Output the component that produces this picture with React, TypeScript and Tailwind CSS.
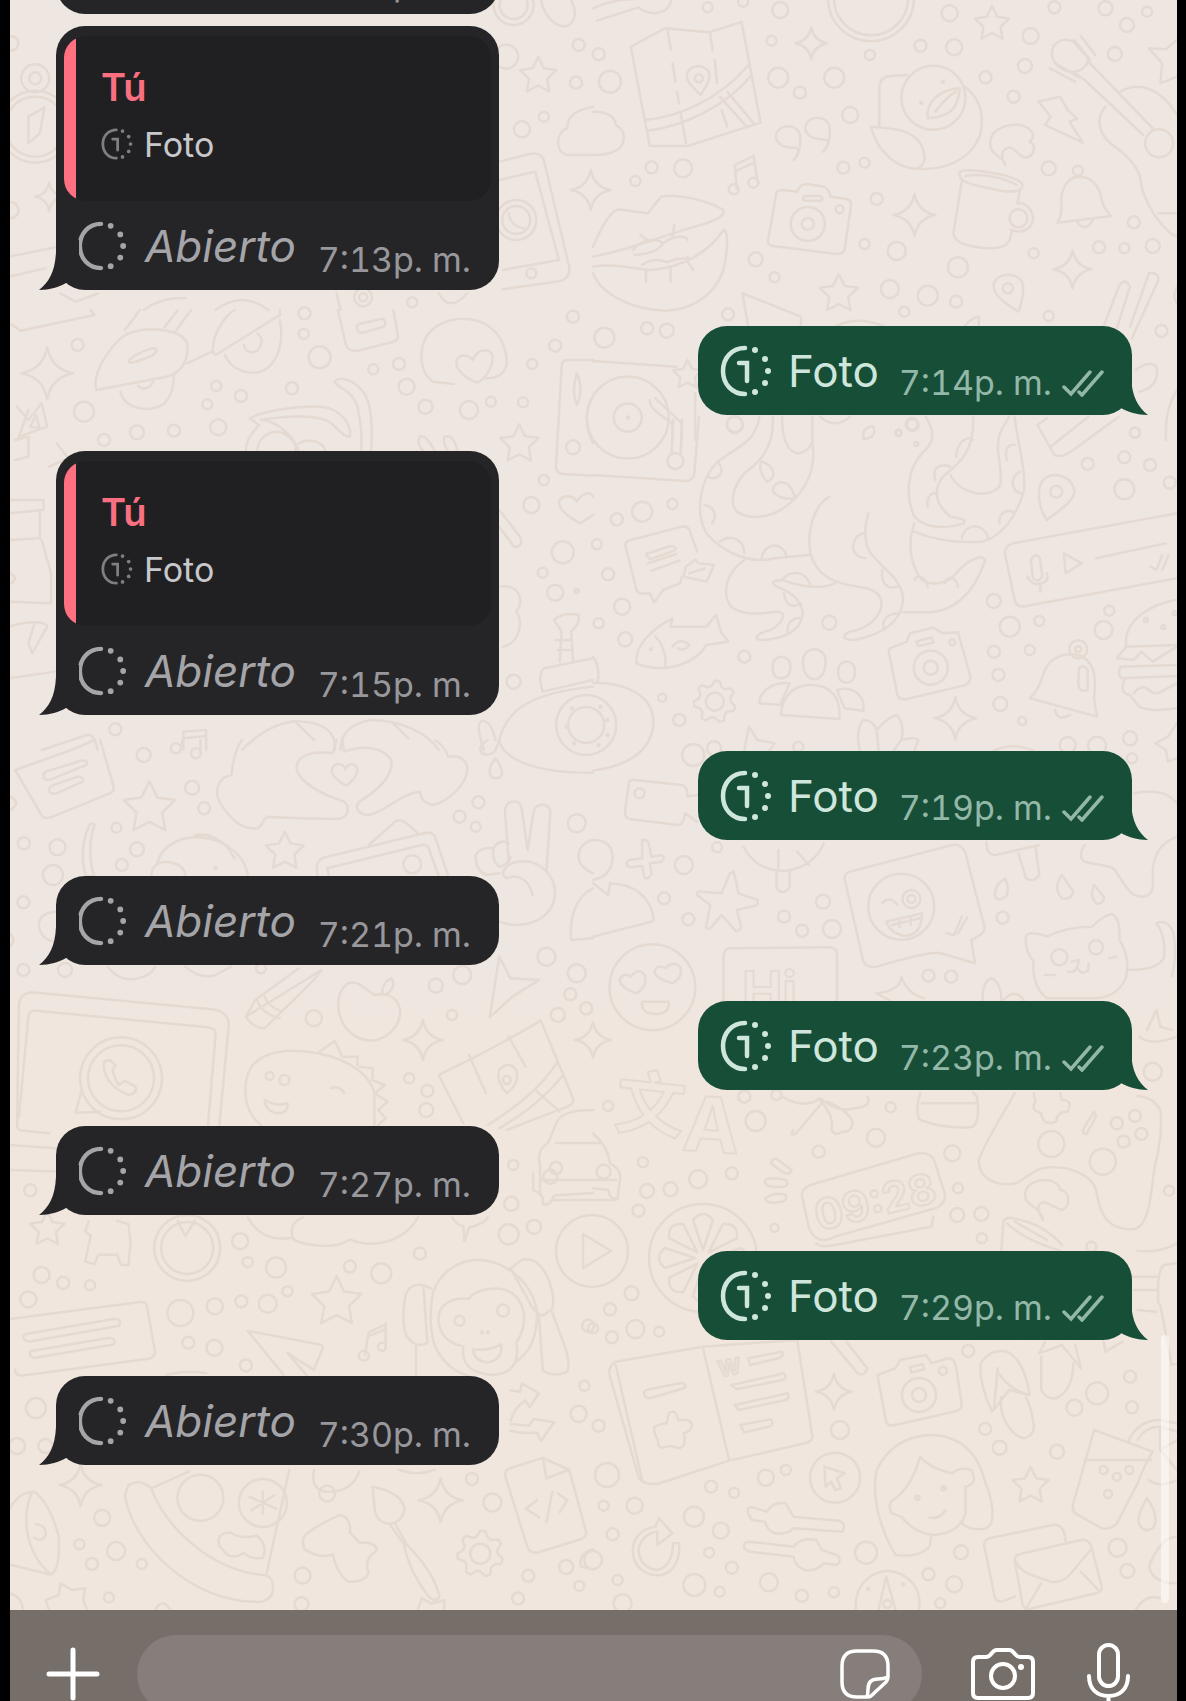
import React from 'react';

type Message =
  | { id: number; kind: 'opened'; time: string; reply?: boolean; grouped?: boolean }
  | { id: number; kind: 'photo'; time: string };

const messages: Message[] = [
  { id: 1, kind: 'opened', time: '7:13', grouped: true },
  { id: 2, kind: 'opened', time: '7:13', reply: true },
  { id: 3, kind: 'photo', time: '7:14' },
  { id: 4, kind: 'opened', time: '7:15', reply: true },
  { id: 5, kind: 'photo', time: '7:19' },
  { id: 6, kind: 'opened', time: '7:21' },
  { id: 7, kind: 'photo', time: '7:23' },
  { id: 8, kind: 'opened', time: '7:27' },
  { id: 9, kind: 'photo', time: '7:29' },
  { id: 10, kind: 'opened', time: '7:30' },
];

/* ---------- Wallpaper ---------- */

interface Tile {
  x: number;
  y: number;
  sx: number;
  sy: number;
  paths: string[];
  // x, y, radius
  dots: number[][];
  stars?: number[][];
  sparks?: number[][];
  gears?: number[][];
}

const SX = 0.3782;
const SY = 0.3333;

const tiles: Tile[] = [
  {
    x: 0, y: 0, sx: SX, sy: SY,
    paths: [
      'M118 322L75 350V430L105 400Z',
      'M26 770L147 742M26 830L120 805M160 880L200 905L260 880',
      'M1430 0C1440 50 1470 85 1500 78C1530 60 1520 20 1510 0',
      'M1568 320C1520 330 1500 350 1500 385C1470 395 1465 455 1500 465H1568',
      'M1320 485L1400 462Q1435 455 1440 490L1505 800Q1510 840 1470 845L1330 868',
      'M1320 540L1415 515L1478 780L1330 810M1345 640Q1350 680 1385 685',
      'M380 930Q430 890 490 895M570 930Q640 870 710 930M890 880L900 930M1160 880Q1190 940 1235 880',
    ],
    dots: [[93, 380, 36], [93, 380, 30], [93, 235, 14], [93, 235, 6], [28, 630, 8], [1358, 15, 20], [1358, 15, 14], [1530, 135, 6], [1523, 248, 6], [1438, 350, 5], [1380, 388, 8], [1338, 170, 12], [1365, 660, 20], [1365, 660, 14], [1405, 820, 5], [960, 892, 9], [960, 892, 4], [1090, 907, 5], [30, 130, 7]],
    stars: [[1423, 228, 19]],
    sparks: [[130, 590, 14], [1562, 570, 20]],
  },
  {
    x: 593, y: 0, sx: SX, sy: SY,
    paths: [
      'M100 140L190 85L305 97L393 66L443 368L250 438L150 438Z',
      'M197 90L206 150M210 190L218 245M222 275L228 310M310 100L316 150M322 180L328 250M232 340L246 430M340 330L355 380',
      'M137 360C230 350 330 300 412 195M143 392C240 380 350 320 420 225M335 290L405 378M355 275L425 370',
      'M285 285C260 260 245 240 248 225C252 190 305 190 308 225C308 250 295 265 285 285Z',
      'M0 25C60 -5 90 0 130 -5M10 62L120 22C150 50 200 45 207 0',
      'M757 380V260Q760 228 790 228L830 225M985 262C1040 310 1040 400 1000 450C960 500 900 512 840 505C780 490 745 430 735 380C800 385 850 390 870 440C880 470 880 490 860 505',
      'M885 355C880 310 910 270 970 265C965 320 950 350 885 355ZM905 335Q935 290 960 275',
      'M530 480C545 460 550 440 525 443C490 440 480 420 485 400C495 370 545 370 548 410C550 440 545 465 530 480Z',
      'M608 455C625 435 628 415 603 418C568 415 558 395 563 375C573 345 623 345 626 385C628 415 623 440 608 455Z',
      'M1090 495C1090 470 1050 470 1050 430C1050 390 1090 370 1130 375C1165 385 1170 410 1155 425C1175 440 1165 475 1140 472C1120 465 1120 445 1100 442C1075 450 1080 475 1090 495Z',
      'M1178 305L1235 290L1255 330L1280 355L1260 365L1295 428L1195 375L1210 350Z',
      'M1215 175C1205 130 1240 110 1270 125L1310 175C1310 195 1290 215 1270 215C1240 215 1225 200 1215 175',
      'M1270 215L1300 240L1455 405M1310 185L1480 385M1272 120L1315 180M1290 108L1328 165M1208 205L1275 245M1222 190L1285 232',
      'M1355 320C1325 360 1340 410 1380 440C1430 480 1450 520 1450 560C1470 640 1520 700 1544 710M1395 275C1440 245 1500 260 1544 345M1495 640H1544',
      'M1544 120L1515 148L1470 145L1505 190L1500 250L1544 230',
      'M380 565L375 495L425 468L435 545M380 512L428 487',
      'M485 578Q487 570 500 570L540 575L548 560Q553 552 570 553L610 560Q622 563 628 590L670 597Q685 600 682 620L665 750Q660 762 645 762L475 738Q460 735 463 720Z',
      'M560 588H600Q610 592 605 602H560Q550 598 560 588Z',
      'M970 525C960 505 1010 508 1060 520C1110 530 1140 545 1135 560C1130 580 1090 578 1050 565C1000 555 970 545 970 525ZM985 528C1030 518 1090 535 1120 555M975 545L953 700C955 730 1000 742 1050 745C1090 745 1100 730 1103 715L1108 690M1128 575L1122 610C1150 605 1168 640 1162 665C1155 695 1125 700 1105 690',
      'M1228 668C1245 640 1235 610 1240 580C1250 540 1270 530 1285 530C1320 530 1340 560 1345 600C1350 625 1360 635 1370 648ZM1280 665Q1300 700 1322 660',
      'M0 740C20 690 40 640 65 628L145 640L180 590C220 580 300 600 345 630C350 650 320 665 270 680C200 700 100 750 0 770M0 800C60 790 100 805 150 810C240 805 310 750 345 690C360 690 355 760 345 810C320 890 260 930 190 932C100 930 20 880 0 820',
      'M105 750C130 715 170 715 185 730C220 700 250 710 250 720M110 765Q170 760 185 730M130 795C170 765 190 790 200 785C230 770 255 780 250 770M125 705L145 720M215 675L210 710M140 810V845M205 808V845M250 785L265 810',
      'M1125 935C1080 905 1055 880 1060 850C1070 815 1130 815 1137 855C1140 890 1130 915 1125 935Z',
      'M410 975L395 880L550 950V975M640 980Q700 945 770 980M985 975Q1005 950 1020 950V980',
      'M1350 980L1390 860Q1405 830 1420 860L1385 985M1425 1015L1495 840Q1495 815 1470 820L1420 980',
      'M0 1083L222 1100M270 1180V1320M150 1200C150 1230 180 1245 210 1270V1320M165 1195L235 1270V1320M1544 860Q1530 890 1544 910',
      'M1445 1175Q1500 1160 1490 1100Q1470 1080 1435 1110M1515 1320Q1510 1230 1544 1170',
      'M0 335C50 335 60 360 60 375C90 390 90 440 55 455C40 465 20 465 0 465',
    ],
    dots: [[900, 293, 32], [1497, 430, 14], [735, -5, 43], [735, -5, 37], [280, 235, 4], [868, 308, 1], [925, 245, 1], [372, 568, 5], [424, 548, 5], [568, 672, 17], [568, 672, 6], [652, 628, 4], [1125, 655, 9], [1282, 512, 5], [1097, 865, 5], [92, 1253, 41], [92, 1253, 14], [92, 1253, 1],
      [303, 22, 5], [495, 30, 8], [397, 5, 5], [472, 122, 5], [732, 165, 5], [866, 137, 6], [955, 142, 8], [943, 40, 8], [1220, 22, 6], [1355, 25, 7], [1465, 35, 5], [1412, 75, 7], [1157, 108, 8], [1380, 162, 7], [1142, 198, 7], [1038, 232, 6], [1112, 290, 6], [15, 163, 6], [45, 245, 11], [490, 233, 10], [638, 233, 10], [547, 278, 6], [680, 345, 8], [155, 502, 6], [238, 505, 9], [112, 543, 5], [662, 503, 6], [718, 488, 5], [1205, 505, 7], [750, 597, 6], [1430, 667, 6], [1480, 738, 7], [1405, 745, 5], [1338, 742, 6], [1165, 760, 5], [430, 778, 7], [803, 753, 9], [718, 732, 5], [480, 832, 5], [965, 802, 10], [785, 867, 9], [885, 887, 10], [960, 905, 6], [823, 935, 5], [357, 943, 6], [30, 1013, 10], [143, 985, 6], [195, 992, 7], [1205, 948, 5], [1503, 993, 6], [375, 1272, 8], [843, 1272, 6], [808, 1298, 3], [1433, 1298, 5]],
    stars: [[1055, 72, 18], [650, 882, 20], [250, 1125, 15]],
    sparks: [[577, 130, 16], [850, 645, 21], [1268, 808, 19]],
  },
  {
    x: 0, y: 310, sx: SX, sy: SY,
    paths: [
      'M26 40L55 62L250 15L240 0',
      'M255 240C240 190 300 90 340 70C400 45 480 60 495 100C500 150 480 190 440 200ZM340 155C345 140 390 115 410 115C420 125 410 130 400 138C370 150 345 165 340 155ZM330 60L370 0M465 62L505 0M435 52L470 0M495 160L560 125',
      'M318 245C330 300 400 310 435 280C460 250 460 210 460 195M365 228C380 245 400 230 405 215',
      'M565 130C555 90 590 20 620 0M570 135L740 15V0M595 135C610 180 660 200 700 180C740 150 750 90 740 30M645 105C645 130 680 135 688 110C695 90 690 75 680 70',
      'M893 0L915 105Q920 125 945 122L1040 95Q1055 90 1052 75L1040 0M945 45C940 60 950 70 960 68L1015 50C1025 35 1015 25 1005 28L950 42',
      'M1200 222L1145 215C1110 190 1105 120 1130 75C1160 30 1220 15 1270 35C1320 60 1340 110 1340 160C1335 195 1310 205 1285 205',
      'M1262 218C1230 205 1200 175 1208 150C1218 130 1240 135 1250 150C1260 120 1290 110 1302 135C1305 170 1285 205 1262 218Z',
      'M885 215C900 190 960 220 975 280C985 330 985 390 980 425M885 215C890 235 930 235 945 290C955 340 958 380 955 425',
      'M650 425C650 390 665 370 685 345L660 325C700 300 830 280 870 295C910 310 930 350 925 380C910 385 890 350 870 335C830 310 740 320 690 330M680 425C680 380 720 355 750 370C780 390 785 410 780 425M690 330C730 330 780 380 790 425M790 400C820 380 860 400 860 425',
      'M45 290L75 330L110 280L125 350L50 380L75 300M80 350L95 315L105 355ZM40 390L75 380V440L40 450M150 400L180 445L130 470',
      'M1110 380Q1125 370 1150 425M1120 425Q1100 400 1110 380M1175 380Q1200 370 1210 425M1185 425Q1170 400 1175 380',
      'M1568 150H1500Q1485 150 1485 170L1470 470Q1470 490 1490 492L1568 497M1525 190Q1510 240 1525 285Q1545 240 1525 190ZM1568 260Q1535 320 1568 400',
      'M26 570H115V600L26 610M105 600V685L26 690M110 690L135 790V880L26 875M26 950C60 935 120 930 125 950L85 1030L75 1000L90 945M26 1105L145 1085',
      'M1535 640C1500 620 1470 590 1480 570C1495 550 1520 560 1525 575C1540 545 1565 545 1568 560M1535 640L1568 615',
      'M1320 600L1375 680Q1385 710 1360 712L1320 650M1320 830C1370 820 1390 870 1365 905C1385 930 1375 1000 1330 1010',
      'M1465 930Q1490 905 1530 915Q1535 940 1510 965L1515 1050M1465 930L1485 965L1480 1055M1470 990H1510M1475 1020H1515M1568 1045L1440 1075Q1420 1090 1435 1145L1568 1110',
      'M1320 1290C1340 1200 1400 1150 1568 1130M1280 1320Q1255 1240 1275 1232Q1300 1235 1310 1290',
      'M640 1320C700 1250 760 1230 800 1235C860 1240 890 1270 885 1320M900 1320C900 1270 930 1240 980 1230C1060 1230 1130 1270 1160 1320M780 1235L830 1290M1040 1240L1080 1285',
      'M110 1320L230 1275Q250 1270 258 1320M485 1320V1265L545 1260V1320M485 1285L545 1278M26 790Q50 800 30 820',
    ],
    dots: [[205, 105, 6], [803, 72, 5], [845, 142, 11], [1055, 162, 6], [1075, 230, 8], [1125, 290, 7], [987, 178, 5], [572, 228, 5], [548, 283, 5], [637, 258, 6], [772, 235, 6], [222, 305, 10], [362, 367, 7], [460, 362, 6], [577, 352, 8], [275, 390, 6], [1240, 300, 9], [1298, 275, 5], [1383, 277, 5], [1468, 107, 6], [1407, 162, 5], [1515, 20, 6], [805, 10, 6], [1515, 412, 7], [1438, 510, 5], [1405, 585, 8], [1488, 727, 11], [1435, 788, 5], [1468, 848, 8], [1525, 843, 2], [1358, 1115, 7], [305, 1258, 6]],
    stars: [[1373, 403, 20]],
    sparks: [[125, 190, 26]],
  },
  {
    x: 593, y: 400, sx: SX, sy: SY,
    paths: [
      'M0 225L245 243Q265 243 268 220L280 50M212 60L208 160M235 60L232 165',
      'M440 50C430 130 380 140 330 185C280 240 270 340 300 400C350 470 430 490 480 475L570 465M475 50C480 130 450 180 400 220C370 260 360 310 380 335C420 365 480 350 520 310C570 260 590 200 580 130V50M500 50C500 130 520 160 545 160C570 155 580 130 580 120',
      'M330 185Q350 215 330 230Q315 240 305 230M295 315C320 320 330 345 315 370M335 425C365 400 400 420 400 460M445 478C450 430 500 420 512 470M445 185C490 200 480 240 460 245C440 220 440 195 445 185M475 270C480 240 520 230 535 295C510 300 480 290 475 270',
      'M625 290C580 320 565 400 575 460C590 530 640 550 700 560C750 565 770 590 760 630C745 670 710 690 680 695C655 705 660 725 700 718C770 700 820 660 820 590C810 520 740 490 725 440C715 400 720 370 728 340',
      'M400 480C350 520 340 580 365 620C400 650 450 640 490 635C515 640 500 670 470 690C430 700 420 720 450 720C510 715 550 690 555 640C550 590 510 570 485 560C470 550 475 540 500 540C550 560 600 570 640 550',
      'M500 540C520 510 560 510 575 555M715 400C680 410 675 470 720 475M765 510C760 550 780 570 805 560M505 580C510 620 530 625 550 610M770 690C760 660 780 640 810 640M515 700C510 670 530 650 550 655',
      'M880 50C900 90 910 120 870 160C830 210 825 290 850 350C880 390 940 385 980 370C990 355 960 355 945 350C900 310 900 260 930 225C970 190 1010 150 1005 50M945 225C970 280 1040 300 1075 260C1090 210 1055 150 1080 90L1100 50M1115 50C1120 120 1145 200 1140 270C1120 350 1080 410 1030 425C970 430 900 420 850 395M850 370C830 430 840 500 870 540C900 560 940 550 960 520C990 480 1030 460 1037 480C1010 580 950 640 880 637H820',
      'M975 415C980 375 1030 360 1045 415M1075 370C1070 335 1100 325 1115 340M1135 280C1105 280 1100 230 1130 215M905 240C895 200 920 190 945 200M885 320C880 290 900 270 910 285M850 540C855 520 880 530 885 560M930 550C935 525 960 530 965 560M960 170C965 110 1000 110 1005 120M1095 180C1085 150 1100 130 1115 135',
      'M715 110Q710 85 740 78Q755 110 715 118ZM600 50Q640 90 680 50',
      'M1175 75L1220 165Q1240 175 1270 150L1390 50M1175 75L1200 55M1210 140L1310 50',
      'M1200 360C1180 330 1170 270 1190 240C1220 210 1270 230 1273 275C1270 310 1220 340 1200 360Z',
      'M1544 340L1110 430Q1085 440 1090 465L1115 600Q1120 625 1145 618L1544 535M1330 475L1515 430M1245 460L1250 520L1292 490ZM1158 480Q1168 455 1182 475L1188 530Q1178 550 1163 535ZM1148 530Q1165 565 1195 545Q1205 540 1200 520M1183 550V575M1475 500L1490 510L1505 465M1505 510L1522 465',
      'M275 455L255 390Q250 378 235 380L100 420Q85 425 85 435L115 570Q120 585 150 580L162 608L185 570L230 550L235 530M140 462L205 438Q225 440 215 452L150 478ZM145 490L220 462M155 512L228 482M240 530L245 500L270 480L280 490L320 495L300 545ZM255 520L295 505',
      'M115 790C110 740 150 690 210 655L205 680H300L325 645L340 700L358 725L300 735C270 790 200 820 125 795ZM165 710C190 740 195 780 190 805M210 740Q230 710 255 735Q240 755 225 745',
      'M555 785C555 735 615 735 615 785C615 820 600 838 585 838C570 838 555 820 555 785ZM497 945C500 880 540 852 580 855C630 858 655 890 652 957Z',
      'M475 800C475 760 522 760 522 800C522 825 510 835 498 835C485 835 475 825 475 800ZM648 813C648 775 693 775 693 813C693 838 682 848 670 848C658 848 648 838 648 813ZM440 910C440 870 480 845 520 850L495 915ZM645 870C690 855 720 890 715 932L665 925Z',
      'M785 745L830 725L838 700L900 683L925 700L965 697L998 830Q1000 850 980 857L830 897Q810 900 805 885L782 755ZM855 725L895 712L900 728L860 738Z',
      'M1155 895C1190 860 1185 810 1210 785C1240 755 1290 755 1310 785C1335 820 1325 870 1325 900L1333 950ZM1222 930Q1225 965 1262 945M1285 805Q1300 790 1308 810V870Q1285 880 1283 850Z',
      'M1544 600C1480 610 1400 660 1410 740L1385 775L1430 780L1450 755L1480 785L1544 740M1410 740L1544 735M1395 800L1544 795M1395 800Q1385 830 1400 835L1544 828M1405 840Q1390 880 1420 885L1440 915Q1450 930 1500 930L1544 925M1430 880Q1450 850 1470 870T1510 870L1544 850',
      'M400 1052L412 980L435 1020L480 1030L465 1055M705 1050C695 1000 705 970 715 960Q740 960 750 990Q780 950 805 945C820 970 820 1000 815 1020Q850 1010 860 1020L850 1052M750 990L755 1050M815 1020L795 1052M1060 1052Q1110 1025 1165 1052',
      'M1544 970L1520 1010L1487 1030L1515 1050L1520 1085L1544 1075M1430 1180Q1510 1160 1544 1210',
      'M275 1185L250 1190Q250 1158 235 1155L110 1140Q97 1138 95 1150L85 1230Q82 1255 100 1258L225 1275Q240 1275 243 1240L275 1265',
      'M0 848C80 848 160 880 160 970C155 1060 80 1100 0 1112M0 770Q20 800 12 848',
    ],
    dots: [[218, 183, 8], [808, 100, 3], [845, 75, 6], [855, 132, 2], [375, 75, 8], [1433, 98, 5], [1405, 172, 6], [1308, 192, 6], [1473, 195, 6], [1405, 268, 10], [1525, 248, 6], [130, 335, 10], [63, 358, 6], [210, 312, 5], [10, 433, 5], [40, 523, 6], [77, 620, 8], [15, 670, 5], [85, 718, 7], [400, 770, 6], [625, 668, 7], [1060, 603, 7], [1102, 680, 10], [1180, 663, 5], [1365, 632, 5], [1350, 690, 9], [1155, 750, 5], [1060, 755, 6], [1072, 825, 6], [1077, 912, 7], [1135, 963, 4], [183, 893, 4], [228, 960, 6], [265, 1065, 11], [320, 1045, 7], [1420, 1015, 7], [1255, 1035, 8], [1333, 1037, 9], [543, 1040, 5], [1425, 1075, 5], [1225, 275, 6], [153, 748, 1], [893, 803, 17], [893, 803, 7], [950, 727, 3], [1283, 748, 9], [1283, 748, 3], [1462, 660, 2], [1508, 682, 2], [1538, 640, 2], [123, 1180, 5], [322, 905, 9], [-18, 975, 30], [-18, 975, 18], [20, 920, 1], [38, 960, 1], [38, 1005, 1], [15, 1035, 1], [-55, 925, 1], [-70, 980, 1], [-50, 1030, 1]],
    sparks: [[958, 955, 21]],
    gears: [[322, 905, 21]],
  },
  {
    x: 0, y: 740, sx: SX, sy: SY,
    paths: [
      'M40 90L110 225Q115 238 135 232L290 160Q305 155 298 130L265 0M40 90L200 25L250 0M115 105Q115 95 130 92L215 62Q235 60 228 75L135 118Q115 125 115 105ZM130 150Q130 138 145 134L205 110Q225 110 218 125L150 160Q130 165 130 150Z',
      'M482 20V0M530 35V0',
      'M640 0C620 30 615 70 612 105C580 110 565 150 580 185C610 240 640 270 680 265C700 255 690 235 710 230C770 235 840 235 890 237C925 235 925 200 910 185C870 170 800 140 785 90C780 50 820 30 880 40L890 0M905 0L910 35C960 15 1010 20 1035 60C1040 110 1000 150 950 185C935 205 950 225 975 225C1020 215 1060 160 1110 155C1115 190 1140 200 1160 190C1200 170 1240 120 1235 80C1230 55 1210 45 1185 50C1180 30 1165 10 1150 0',
      'M915 137C880 115 870 95 882 78C895 65 910 75 913 88C920 65 945 70 945 90C945 110 930 125 915 137Z',
      'M1310 55Q1285 90 1300 112Q1325 120 1328 100Q1325 75 1310 55ZM1275 40Q1260 20 1290 0M1275 40Q1300 50 1310 30L1320 0M1320 0C1330 60 1420 100 1568 98',
      'M250 255Q240 245 235 258C215 310 215 370 228 408H250C235 370 235 300 250 255Z',
      'M400 408C400 370 430 360 460 370Q490 380 490 408M415 370C430 310 480 290 530 292C600 300 650 350 655 408M515 285Q560 275 600 320L620 355',
      'M840 408Q830 360 860 352L1120 280Q1145 272 1152 295L1185 408M870 408L865 385L1115 315Q1130 312 1135 330L1160 408M975 315L1045 245Q1060 235 1075 250L1105 280',
      'M1345 365L1335 210Q1340 180 1365 185Q1378 190 1380 210L1395 330L1410 220Q1415 190 1440 195Q1455 200 1455 220L1445 390M1345 310Q1320 295 1305 325Q1270 320 1258 345Q1255 390 1285 405L1320 400M1305 325Q1300 365 1320 380Q1345 375 1350 350M1320 545C1380 570 1450 545 1465 480C1475 430 1450 380 1400 365Q1360 360 1340 380Q1320 400 1340 415C1370 400 1400 420 1408 465',
      'M1568 300Q1530 310 1530 350Q1530 380 1568 400M1568 445C1520 470 1505 540 1510 600L1568 595M147 515Q100 520 103 560Q110 600 147 605',
      'M285 680Q310 720 350 718Q400 710 410 680M490 680Q530 720 570 705L610 680M26 580Q45 600 26 620M26 170Q60 190 26 210',
      'M50 800Q50 760 85 757L560 808Q605 815 605 855L580 1155M50 800L45 1155Q45 1170 60 1172L130 1180M75 830Q78 810 95 812L550 862Q572 865 570 885L550 1155M75 830L50 1130',
      'M215 1055L200 1118L265 1115M275 965C270 1000 290 1045 340 1065Q365 1060 358 1040L330 1022L315 1035C305 1020 300 1005 298 990L305 975L290 960Z',
      'M650 830L675 780L790 685M850 690L830 720L740 820L700 865Q670 865 650 830ZM680 780Q690 820 740 835M700 770Q710 800 745 815',
      'M965 745C920 700 890 750 895 810C905 870 940 900 980 902C1030 900 1060 850 1058 810C1050 760 1010 760 990 765ZM1010 765Q1010 725 1035 715Q1050 740 1020 765',
      'M1320 650L1295 832L1355 770L1425 720L1350 715Z',
      'M690 1155C640 1110 640 1030 665 980C700 930 770 925 840 940C930 960 980 1010 990 1060V1155M845 935L885 903L905 950M905 950L945 950V975M950 980L985 985L985 1020L1018 1035L990 1060L1025 1085L1000 1110L1020 1135L1000 1155M700 1080Q730 1100 760 1090Q765 1120 730 1120Q700 1110 700 1080ZM875 1045Q900 1035 910 1060',
      'M1160 1005Q1300 930 1430 842L1515 1075Q1520 1090 1500 1100L1340 1170M1160 1005L1225 1150M1240 945L1285 1060M1345 890L1390 980M1290 1155C1380 1090 1430 1040 1475 965M1320 1165C1390 1120 1450 1060 1490 1005M1415 1050L1480 1115M1340 1060Q1310 1020 1320 990Q1345 960 1365 990Q1375 1030 1340 1060Z',
      'M26 1215L147 1225M26 1290L147 1295',
    ],
    dots: [[380, 45, 7], [465, 25, 5], [518, 40, 5], [508, 143, 7], [540, 205, 6], [308, 263, 5], [63, 310, 6], [152, 322, 8], [362, 328, 7], [322, 375, 6], [140, 405, 10], [62, 487, 6], [62, 690, 6], [172, 690, 7], [690, 685, 5], [830, 835, 8], [1265, 187, 6], [1215, 230, 6], [1258, 260, 5], [1525, 250, 9], [1445, 650, 9], [1222, 705, 9], [1152, 737, 7], [1195, 825, 5], [1475, 825, 7], [1508, 763, 6], [1525, 700, 9], [1550, 805, 6], [1082, 1015, 5], [1130, 1053, 6], [1127, 1110, 7], [1357, 1275, 5], [570, 385, 1], [1090, 373, 9], [320, 1015, 41], [320, 1015, 33], [713, 1008, 4], [752, 1020, 5], [1340, 1020, 4]],
    stars: [[395, 205, 27], [753, 335, 20]],
    sparks: [[1118, 900, 20]],
  },
  {
    x: 593, y: 830, sx: SX, sy: SY,
    paths: [
      'M0 30Q50 30 52 80Q50 140 0 150M0 160L40 195L45 160Q130 165 155 240Q165 270 155 275L0 320',
      'M130 30Q145 25 148 45L155 80L180 75Q195 85 180 95L150 100L155 130Q145 155 135 140L130 108L100 112Q80 105 95 90L130 85Z',
      'M372 125L385 190L435 210Q440 225 425 228L380 240L392 290Q385 310 375 300L340 255L310 295Q295 300 300 285L310 225L275 195Q275 180 290 185L340 190L362 130Z',
      'M398 50C420 100 460 125 510 122C570 115 600 70 610 40M485 122V175Q505 200 520 170V122M490 115V60M540 65L570 105',
      'M1040 35Q1040 75 1065 75L1180 45M1125 70L1145 145Q1165 160 1180 135L1170 50',
      'M665 145Q665 130 680 125L950 45Q975 40 985 70L1035 290Q1040 310 1000 330L1010 400L920 370Q900 360 750 410Q725 415 715 395Z',
      'M765 220Q785 195 805 225M775 275L870 250Q870 310 830 318Q790 315 775 275ZM790 285L865 265M810 270V290M840 262V285M935 310L955 315L975 260M965 310L990 262',
      'M1065 205Q1055 170 1090 145Q1100 170 1095 195Q1080 215 1065 205ZM1240 135Q1215 175 1240 205Q1265 210 1270 185ZM1325 165Q1310 205 1335 222Q1355 215 1350 200Z',
      'M1300 45Q1280 80 1300 95C1340 110 1360 100 1380 120C1410 170 1420 200 1450 200C1490 200 1480 150 1480 120C1485 70 1500 40 1544 20',
      'M1145 320Q1150 300 1200 320Q1250 290 1320 290Q1345 260 1370 252Q1395 260 1392 330Q1420 380 1410 440Q1390 500 1330 505H1200Q1160 470 1165 395Q1140 360 1145 320M1415 420Q1500 420 1510 380Q1515 320 1490 280Q1520 265 1535 310Q1545 380 1530 440M1265 395L1285 390L1280 410Q1275 430 1255 425M1280 410Q1290 440 1310 420V400M1195 435H1220M1365 385L1385 380',
      'M115 490Q75 475 70 450Q80 425 100 440Q120 410 137 435Q145 470 115 490ZM210 460Q165 445 162 425Q170 400 192 415Q210 390 230 410Q240 440 210 460ZM130 515H200Q205 550 165 552Q125 550 130 515Z',
      'M345 512V380Q345 355 365 355L625 352Q645 352 645 375V512',
      'M815 440Q815 480 750 490L785 512M815 440Q830 490 875 505M1030 512Q1030 450 1055 445Q1080 460 1080 512M1085 512Q1115 470 1140 512M1465 600L1490 540L1500 590L1530 600M1445 620Q1470 650 1544 620',
      'M500 800Q560 840 600 805Q650 850 690 835Q740 830 725 800M530 900Q520 920 535 912L605 820M600 810Q640 860 630 900Q640 920 660 905Q690 905 685 870Q670 840 620 815',
      'M865 790Q850 850 865 870Q940 900 1005 890Q1025 870 1015 800L1005 788M870 820H1015',
      'M1115 790C1080 860 1040 930 1020 990C1020 1050 1070 1070 1120 1060C1160 1030 1180 1010 1210 1012C1270 1010 1320 1040 1330 1080C1340 1140 1350 1200 1430 1198C1470 1190 1475 1100 1485 1010C1500 950 1505 880 1500 840Q1480 800 1440 798M1165 790L1170 815Q1155 840 1185 850Q1190 890 1225 875Q1225 845 1255 845Q1270 810 1240 810L1235 790M1325 845L1300 890Q1290 915 1305 912L1330 860Z',
      'M470 1000Q475 980 490 990L525 1020Q520 1040 500 1025ZM455 1050Q470 1040 510 1050Q520 1070 500 1070Q450 1075 455 1050ZM455 1105Q480 1085 510 1095Q515 1110 500 1115Q460 1125 455 1105Z',
      'M0 910Q40 950 45 1000Q80 1020 70 1060L65 1105Q45 1110 40 1080L0 1075',
      'M555 1110Q545 1080 575 1065L860 970Q895 965 905 1000L930 1090Q935 1120 905 1135L640 1220Q590 1250 570 1190ZM590 1240Q600 1255 640 1245L895 1190L900 1160',
      'M1190 1170C1180 1120 1130 1130 1145 1080C1160 1040 1230 1040 1235 1080C1260 1080 1265 1130 1240 1140C1210 1130 1200 1110 1185 1120C1170 1130 1180 1150 1190 1170Z',
      'M1080 1262L1085 1175Q1090 1160 1110 1165Q1190 1180 1240 1245M1095 1180Q1140 1230 1235 1262M1115 1175L1200 1230M1544 1240Q1500 1270 1440 1262',
    ],
    dots: [[815, 230, 33], [842, 207, 9], [842, 207, 4], [157, 472, 43], [1233, 382, 8], [1330, 352, 7], [240, 105, 9], [328, 52, 5], [188, 205, 6], [252, 268, 6], [608, 215, 7], [505, 260, 6], [553, 302, 6], [632, 297, 9], [1083, 263, 6], [887, 437, 6], [947, 440, 6], [40, 828, 5], [430, 873, 10], [400, 800, 6], [485, 795, 5], [787, 832, 5], [748, 923, 9], [597, 965, 6], [950, 970, 8], [132, 997, 5], [143, 1083, 7], [205, 1078, 7], [278, 1048, 9], [367, 1030, 6], [120, 1142, 6], [28, 1025, 7], [480, 1193, 4], [965, 1075, 5], [963, 1155, 7], [1027, 1152, 7], [1028, 1225, 5], [1212, 942, 13], [1348, 995, 13], [1385, 880, 6], [1433, 858, 6], [1403, 935, 6], [1450, 912, 6], [1480, 725, 9], [1523, 1082, 5], [1318, 1250, 5]],
    sparks: [[0, 630, 18]],
  },
  {
    x: 0, y: 1170, sx: SX, sy: 0.3387,
    paths: [
      'M235 150L225 180L240 195L225 270L250 278L260 250H310L320 280L340 282L345 215L340 160L310 150M470 150L490 195L515 150',
      'M655 140C680 190 720 210 770 200C790 220 880 240 925 205C990 235 1070 210 1105 140M775 200Q760 160 800 140',
      'M1195 140Q1210 165 1225 165L1228 210L1240 170Q1280 160 1290 140M1410 10V60Q1440 70 1435 100Q1455 110 1465 75L1568 68',
      'M26 440L370 390Q385 388 388 400L410 535Q410 555 390 558L60 607Q40 608 40 590M65 485L300 440Q325 440 315 460L75 507Q55 500 65 485ZM80 535L290 495Q310 500 300 515L90 555Q75 550 80 535Z',
      'M655 475L845 515Q860 520 850 535L830 590L760 540L810 605M655 475L750 605M965 545L975 480L1020 455V525M972 492L1020 470',
      'M1145 360C1170 290 1220 265 1270 265C1350 275 1410 340 1420 420C1420 500 1400 540 1360 570M1145 360Q1130 450 1150 520Q1180 590 1240 608M1160 450C1155 400 1190 375 1240 380C1250 360 1300 340 1340 355C1390 380 1400 450 1365 510C1375 570 1350 605 1300 605C1240 600 1220 570 1225 520C1190 515 1165 490 1160 450ZM1250 530Q1290 535 1325 515Q1330 560 1290 568Q1255 565 1250 530Z',
      'M1140 350Q1090 320 1072 370Q1060 450 1075 490Q1100 530 1130 510M1120 350L1130 510M1100 515V605M1350 290L1380 265Q1420 255 1445 310Q1470 370 1460 410L1435 430Q1410 420 1400 390ZM1425 430L1435 590Q1460 615 1500 595Q1510 570 1490 510L1460 420',
      'M1350 650L1375 655L1380 630L1425 660L1400 700L1390 680Q1360 700 1350 740M1350 750L1400 755L1410 735L1465 745L1430 800L1420 775Q1380 780 1350 770',
      'M26 1000Q50 950 90 950Q130 980 155 1080Q160 1180 135 1195L26 1165M85 950C60 1010 60 1120 130 1190M95 1045Q125 1050 120 1080Q110 1100 90 1085',
      'M330 960C350 1100 500 1280 690 1275Q730 1265 720 1215Q715 1195 690 1195C560 1180 440 1060 400 940Q370 910 340 930ZM400 940L500 890M765 885L705 1190M695 950V1015M660 965L730 1000M665 1005L725 960',
      'M580 1110Q570 1070 610 1070Q630 1090 680 1080Q710 1110 695 1145Q660 1150 645 1130Q620 1150 600 1135ZM830 885Q820 950 870 950Q930 950 950 890',
      'M810 1075Q850 1040 900 1018Q930 1030 925 1070L950 1100Q1000 1100 995 1125Q960 1150 975 1190Q960 1220 920 1215Q890 1190 880 1135Q850 1150 805 1120Q795 1090 810 1075Z',
      'M985 935Q1060 950 1070 1000Q1065 1040 1030 1045Q990 1040 990 990ZM1045 1045L1075 1105Q1150 1190 1162 1260Q1150 1280 1130 1255Q1080 1180 1068 1105L1030 1045',
      'M1335 900Q1335 885 1350 880L1435 850L1505 885L1550 1070Q1550 1085 1535 1090L1420 1130Q1400 1130 1395 1115ZM1435 850L1445 910L1505 885M1420 975L1390 1000L1425 1025M1460 950L1445 1040M1475 955L1500 975L1480 1010',
      'M130 1300L120 1270L155 1255L160 1220L190 1240L225 1235L220 1270L230 1298M26 1250Q60 1260 60 1298M410 1298Q430 1260 450 1298M1105 1298L1115 1265L1140 1280L1175 1270V1298M1568 1120Q1530 1130 1535 1170L1568 1180',
      'M440 605Q500 590 545 600M1055 885Q1100 905 1150 885',
    ],
    dots: [[495, 230, 33], [495, 230, 26], [1215, 445, 5], [1330, 415, 6], [1275, 480, 1], [1290, 480, 1], [962, 548, 5], [1010, 522, 4], [530, 968, 23], [695, 983, 24], [1270, 1133, 10], [1455, 20, 7], [80, 60, 6], [635, 210, 8], [655, 272, 5], [110, 310, 8], [167, 333, 6], [238, 340, 5], [75, 382, 8], [730, 288, 10], [925, 285, 6], [1008, 305, 10], [1110, 247, 6], [1352, 100, 7], [1345, 190, 10], [1412, 168, 7], [477, 422, 13], [568, 402, 8], [638, 388, 6], [708, 395, 9], [760, 358, 5], [498, 510, 6], [567, 525, 8], [650, 577, 6], [1545, 637, 5], [1530, 720, 8], [95, 703, 10], [45, 815, 8], [120, 815, 7], [1555, 460, 6], [270, 1027, 8], [210, 1105, 5], [307, 1125, 9], [243, 1163, 6], [375, 1163, 5], [800, 1197, 8], [1248, 912, 6], [1302, 982, 9], [1397, 1198, 6], [1497, 1172, 7], [1370, 1265, 6], [1532, 1228, 5], [288, 1262, 5], [797, 1282, 7], [865, 955, 8]],
    stars: [[125, 175, 18], [890, 390, 26]],
    sparks: [[213, 930, 21], [1165, 975, 22]],
    gears: [[1270, 1133, 23]],
  },
  {
    x: 593, y: 1250, sx: SX, sy: SY,
    paths: [
      'M60 335L290 290L540 270L580 560Q580 575 560 580L360 632L170 702Q130 705 120 680L45 380Q38 350 60 335M290 290L360 632M60 345L130 690M135 430Q135 420 150 418L235 398Q250 405 240 415L150 445Q135 445 135 430Z',
      'M200 490Q220 475 225 510Q260 505 262 525Q260 545 240 550Q250 590 225 595Q205 585 195 590Q170 600 172 570Q160 550 162 530Q185 520 195 520Z',
      'M410 325L500 305Q505 320 490 325L415 345ZM365 405L505 370Q515 385 500 390L380 418ZM375 465L515 430Q520 445 510 450L385 480ZM390 525L470 508Q480 525 465 530L400 548Z',
      'M630 275L700 370Q720 380 725 355L670 275',
      'M752 375L800 355L812 330L880 315L895 340L940 325Q955 325 960 350L975 465Q975 480 955 485L800 525Q780 530 775 515ZM838 352L872 342L876 358L842 368Z',
      'M1055 485Q1020 400 1025 340Q1050 295 1095 305Q1140 330 1155 435L1100 420L1060 480M1070 355L1060 480M1070 365Q1100 420 1155 435M1080 440C1070 500 1110 560 1140 565Q1170 555 1165 520Q1160 480 1145 440M1180 310L1240 285L1290 355M1185 320V420Q1200 450 1225 445Q1270 420 1270 340M1350 275L1355 305L1400 275M1180 310L1195 275M1290 355L1275 285',
      'M612 650L665 670L645 685L655 715L640 720L630 695L615 710Z',
      'M800 915C760 840 735 740 750 660C780 590 830 555 900 555C980 560 1020 620 1035 690C1060 760 1065 820 1040 835Q1000 845 975 820M800 915Q860 925 890 890L895 855M865 620C850 680 830 720 800 745Q775 760 790 790L815 800Q850 850 900 855Q970 850 985 790L985 710Q1020 700 1000 660Q970 650 950 670Q890 655 865 620M890 803Q915 810 932 780',
      'M1325 540L1480 605Q1460 640 1440 700L1385 820Q1370 840 1345 835L1275 790Q1265 780 1270 760ZM1300 630H1475M1415 575Q1440 510 1500 510L1544 520M1440 570Q1460 530 1500 530L1544 545M1470 690Q1500 715 1544 690M1500 530V600L1544 570M1500 600L1544 660',
      'M1465 745Q1435 800 1445 825Q1460 850 1480 835Q1500 800 1465 745Z',
      'M165 830Q110 840 105 900C105 960 150 980 180 975C220 965 230 920 228 880H212Q210 950 170 960Q125 955 120 900Q130 850 170 845V885L210 850L175 805Z',
      'M410 790Q405 765 430 775L460 785Q475 755 510 760L530 800L650 812Q670 820 660 845L530 835Q515 855 480 850Q460 840 455 815L420 810ZM400 895Q395 875 415 875L530 890Q550 860 590 870L605 900L645 915Q660 930 645 945L610 940Q590 965 560 960Q535 950 530 920L415 905Z',
      'M695 1080C690 1010 730 965 780 962C840 970 870 1020 862 1080M755 1080L775 980L800 1080',
      'M1115 1040L1080 1055Q1065 1055 1062 1040L1035 890Q1032 870 1050 865L1215 825Q1235 820 1245 845L1250 875M1115 930Q1115 915 1130 912L1290 870Q1310 865 1318 890L1345 1010Q1348 1025 1330 1030L1150 1078Q1140 1080 1135 1060ZM1115 930Q1130 965 1160 975L1210 995Q1240 1000 1260 975L1315 900M1185 1000L1145 1075M1290 965L1340 1025',
      'M1544 860Q1500 860 1470 950Q1480 1000 1544 1000M1435 1080Q1460 1030 1500 1045',
      'M1495 160Q1490 60 1510 45L1544 40M1425 80H1490M1430 120H1490M1440 180L1490 185M1500 165L1530 345L1544 340',
    ],
    dots: [[862, 435, 17], [862, 435, 7], [925, 362, 4], [640, 683, 25], [858, 743, 2], [927, 715, 2], [1350, 660, 4], [1385, 680, 4], [1418, 660, 4], [1362, 732, 4], [778, 1062, 4], [728, 1017, 1], [820, 1003, 1], [992, 303, 6], [1420, 380, 6], [1333, 430, 11], [1273, 473, 8], [1425, 472, 6], [1037, 537, 6], [1075, 593, 7], [1227, 605, 7], [653, 540, 9], [15, 527, 6], [37, 675, 12], [457, 683, 8], [510, 660, 5], [312, 710, 6], [373, 728, 5], [28, 767, 5], [110, 767, 8], [267, 800, 10], [338, 842, 8], [52, 853, 6], [307, 908, 5], [367, 953, 6], [722, 908, 11], [973, 907, 7], [887, 973, 6], [955, 1003, 8], [1387, 893, 9], [1413, 963, 7], [268, 1005, 11], [335, 1025, 5], [465, 997, 9], [552, 1037, 6], [637, 1027, 5], [65, 990, 5], [78, 1060, 9], [0, 930, 9], [918, 1060, 5], [102, 130, 7], [45, 178, 6], [112, 237, 9], [175, 245, 5], [50, 262, 6], [0, 235, 5]],
    stars: [[1157, 708, 19]],
    sparks: [[637, 425, 18]],
  },
];

// Closed shape whose radius runs through the given ratios, one per corner
const radial = (cx: number, cy: number, r: number, ratios: number[], turns: number) => {
  const count = ratios.length * turns;
  const points = Array.from({ length: count }, (_, i) => {
    const a = (i / count) * Math.PI * 2 - Math.PI / 2;
    const k = r * ratios[i % ratios.length];
    return `${(cx + Math.cos(a) * k).toFixed(1)} ${(cy + Math.sin(a) * k).toFixed(1)}`;
  });
  return `M${points.join('L')}Z`;
};

const spark = (x: number, y: number, r: number) => {
  const k = r * 0.16;
  return `M${x} ${y - r}Q${x + k} ${y - k} ${x + r} ${y}Q${x + k} ${y + k} ${x} ${y + r}Q${x - k} ${y + k} ${x - r} ${y}Q${x - k} ${y - k} ${x} ${y - r}Z`;
};

const Wallpaper: React.FC = () => (
  <svg
    aria-hidden="true"
    viewBox="10 0 1167 1610"
    preserveAspectRatio="xMidYMin slice"
    className="absolute inset-0 h-full w-full text-[#e4dad2]"
    fill="none"
    stroke="currentColor"
    strokeWidth="2.5"
    strokeLinecap="round"
    strokeLinejoin="round"
  >
    {tiles.map((tile) => (
      <g key={`${tile.x}-${tile.y}`}>
        <g transform={`translate(${tile.x} ${tile.y}) scale(${tile.sx} ${tile.sy})`}>
          {tile.paths.map((d) => (
            <path key={d} d={d} vectorEffect="non-scaling-stroke" />
          ))}
        </g>
        <g transform={`translate(${tile.x} ${tile.y})`}>
          {tile.dots.map(([x, y, r], i) => (
            <circle key={i} cx={x * tile.sx} cy={y * tile.sy} r={r} />
          ))}
          {tile.stars?.map(([x, y, r], i) => (
            <path key={i} d={radial(x * tile.sx, y * tile.sy, r, [1, 0.5], 5)} />
          ))}
          {tile.gears?.map(([x, y, r], i) => (
            <path key={i} d={radial(x * tile.sx, y * tile.sy, r, [1, 1, 0.76, 0.76], 7)} />
          ))}
          {tile.sparks?.map(([x, y, r], i) => (
            <path key={i} d={spark(x * tile.sx, y * tile.sy, r)} />
          ))}
        </g>
      </g>
    ))}

    {/* Play button */}
    <circle cx="592" cy="1251" r="36" />
    <path d="M583 1234V1268L611 1251Z" />

    {/* Orange slice */}
    <circle cx="703" cy="1258" r="54" />
    {[0, 45, 90, 135, 180, 225, 270, 315].map((angle) => (
      <path key={angle} d="M703 1250L693 1220Q703 1208 713 1220Z" transform={`rotate(${angle} 703 1258)`} />
    ))}

    {/* Front of the car */}
    <path d="M540 1195V1165Q536 1150 548 1143L556 1124Q560 1110 593 1110M556 1143H600M552 1200H616M540 1180H616" />
    <circle cx="556" cy="1168" r="6" />

    <g className="font-['Inter','Noto_Sans_CJK_SC',sans-serif] font-bold" strokeWidth="2">
      <text x="742" y="1010" fontSize="54">Hi</text>
      <text x="616" y="1130" fontSize="70" transform="rotate(6 650 1100)">文</text>
      <text x="683" y="1152" fontSize="76" transform="rotate(4 710 1130)">A</text>
      <text x="814" y="1218" fontSize="42" transform="rotate(-14 870 1205)">09:28</text>
      <text x="718" y="1375" fontSize="22" transform="rotate(-10 730 1368)">W</text>
    </g>
  </svg>
);

/* ---------- Icons ---------- */

interface OnceIconProps {
  className: string;
  opened?: boolean;
}

const OnceIcon: React.FC<OnceIconProps> = ({ className, opened }) => (
  <svg aria-hidden="true" viewBox="0 0 52 52" className={className} fill="none" stroke="currentColor" strokeLinecap="round">
    <path d="M25 3C12 3 3 13 3 26S12 49 25 49" strokeWidth="4.5" />
    {!opened && <path d="M19 18H27V36" strokeWidth="4.5" />}
    <g fill="currentColor" stroke="none">
      <circle cx="35" cy="5" r="3" />
      <circle cx="45" cy="14" r="3" />
      <circle cx="48" cy="26" r="3" />
      <circle cx="45" cy="38" r="3" />
      <circle cx="35" cy="47" r="3" />
    </g>
  </svg>
);

const ReadTicks: React.FC = () => (
  <svg role="img" aria-label="Leído" viewBox="0 0 42 27" className="h-[27px] w-[42px]" fill="none" stroke="currentColor" strokeWidth="3.5" strokeLinecap="round">
    <path d="M2 17L9 24L28 2M17 22L20 25L40 2" />
  </svg>
);

const Tail: React.FC<{ className: string }> = ({ className }) => (
  <svg aria-hidden="true" viewBox="0 0 44 50" className={`absolute bottom-0 h-[50px] w-[44px] ${className}`} fill="currentColor">
    <path d="M17 0V12C16 32 10 42 0 50C11 50 20 47 27 43L40 30V0Z" />
  </svg>
);

/* ---------- Messages ---------- */

const Stamp: React.FC<{ time: string }> = ({ time }) => (
  <time className="text-[34px] leading-8 whitespace-nowrap tabular-nums">{time}p. m.</time>
);

const QuotedPhoto: React.FC = () => (
  <div className="mx-2 mt-[10px] flex h-[165px] overflow-hidden rounded-[22px] bg-[#202023]">
    <div className="w-3 bg-[#ff7080]" />
    <div className="flex flex-col justify-center pb-[6px] pl-[25px]">
      <p className="text-[38px] leading-[57px] font-semibold text-[#fa7080]">Tú</p>
      <p className="flex items-center gap-[11px] text-[34px] leading-[57px] text-[#c8c8cb]">
        <OnceIcon className="size-8 text-[#7f7f83]" />
        Foto
      </p>
    </div>
  </div>
);

const OpenedBubble: React.FC<{ time: string; reply?: boolean; grouped?: boolean }> = ({ time, reply, grouped }) => (
  <article
    className={`relative w-[443px] max-w-full shrink-0 self-start rounded-[29px] bg-[#252528] ${
      grouped ? '-mb-6' : ''
    }`}
  >
    {reply && <QuotedPhoto />}
    <div className="flex h-[89px] items-center pr-7 pl-[21px]">
      <OnceIcon opened className="size-[50px] text-[#a5a5a9]" />
      <p className="ml-[18px] text-[44px] leading-none text-[#a5a5a9] italic">Abierto</p>
      <div className="ml-auto self-end pb-3 text-[#98989c]">
        <Stamp time={time} />
      </div>
    </div>
    {!grouped && <Tail className="-left-[17px] text-[#252528]" />}
  </article>
);

const PhotoBubble: React.FC<{ time: string }> = ({ time }) => (
  <article className="relative w-[434px] max-w-full shrink-0 self-end rounded-[29px] bg-[#174e38]">
    <div className="flex h-[89px] items-center pr-7 pl-[22px]">
      <OnceIcon className="size-[52px] text-[#cfe6dc]" />
      <p className="ml-4 text-[44px] leading-none text-[#cfe6dc]">Foto</p>
      <div className="ml-auto flex items-center gap-[10px] self-end pb-4 text-[#93b8a8]">
        <Stamp time={time} />
        <ReadTicks />
      </div>
    </div>
    <Tail className="-right-4 -scale-x-100 text-[#174e38]" />
  </article>
);

/* ---------- Composer ---------- */

const Composer: React.FC = () => (
  <form
    className="relative -mb-3 flex shrink-0 items-center bg-[#756e69] pt-[25px] pr-[47px] pl-9 text-white"
    onSubmit={(e) => e.preventDefault()}
  >
    <button type="button" aria-label="Adjuntar">
      <svg viewBox="0 0 54 54" className="size-[54px]" fill="none" stroke="currentColor" strokeWidth="5" strokeLinecap="round">
        <path d="M27 3V51M3 27H51" />
      </svg>
    </button>
    <div className="ml-[37px] flex h-[78px] min-w-0 flex-1 items-center rounded-full bg-[#867e7a] pr-8 pl-8">
      <input type="text" aria-label="Mensaje" className="min-w-0 flex-1 bg-transparent text-[42px] outline-none" />
      <button type="button" aria-label="Stickers">
        <svg viewBox="0 0 50 50" className="size-[50px]" fill="none" stroke="currentColor" strokeWidth="3.5" strokeLinejoin="round">
          <path d="M17 2H33Q48 2 48 17V28Q48 31 46 33L31 47Q30 48 27 48H17Q2 48 2 33V17Q2 2 17 2Z" />
          <path d="M27 48C28 45 28 43 28 40Q28 30 38 30Q44 30 48 28" />
        </svg>
      </button>
    </div>
    <button type="button" aria-label="Cámara" className="ml-[49px]">
      <svg viewBox="0 0 64 52" className="h-[52px] w-16" fill="none" stroke="currentColor" strokeWidth="4" strokeLinejoin="round">
        <path d="M7 9H15Q18 9 20 6L21 5Q23 2 26 2H38Q41 2 43 5L44 6Q46 9 49 9H57Q62 9 62 14V45Q62 50 57 50H7Q2 50 2 45V14Q2 9 7 9Z" />
        <circle cx="32" cy="28" r="12" />
        <circle cx="50" cy="19" r="3" fill="currentColor" stroke="none" />
      </svg>
    </button>
    <button type="button" aria-label="Grabar audio" className="ml-[52px]">
      <svg viewBox="0 0 43 62" className="h-[62px] w-[43px]" fill="none" stroke="currentColor" strokeWidth="4" strokeLinecap="round">
        <rect x="12" y="2" width="19" height="41" rx="9.5" />
        <path d="M2 33C2 46 10 53 21.5 53C33 53 41 46 41 33M21.5 53V60" />
      </svg>
    </button>
  </form>
);

const App: React.FC = () => (
  <div className="flex h-screen flex-col overflow-hidden bg-black pr-[9px] pl-[10px] font-['Inter','Liberation_Sans',sans-serif]">
    <main className="relative flex min-h-0 flex-1 flex-col justify-end overflow-hidden bg-linear-to-b from-[#eee6e1] from-60% to-[#f0e6dd] to-66%">
      <Wallpaper />
      <div className="relative flex flex-col gap-9 pr-[45px] pb-[145px] pl-[46px]">
        {messages.map((message) =>
          message.kind === 'opened' ? (
            <OpenedBubble key={message.id} time={message.time} reply={message.reply} grouped={message.grouped} />
          ) : (
            <PhotoBubble key={message.id} time={message.time} />
          )
        )}
      </div>
      {/* Scroll position */}
      <div className="absolute right-2 bottom-[7px] h-[268px] w-2 rounded-full bg-white/50" />
    </main>
    <Composer />
  </div>
);

export default App;
